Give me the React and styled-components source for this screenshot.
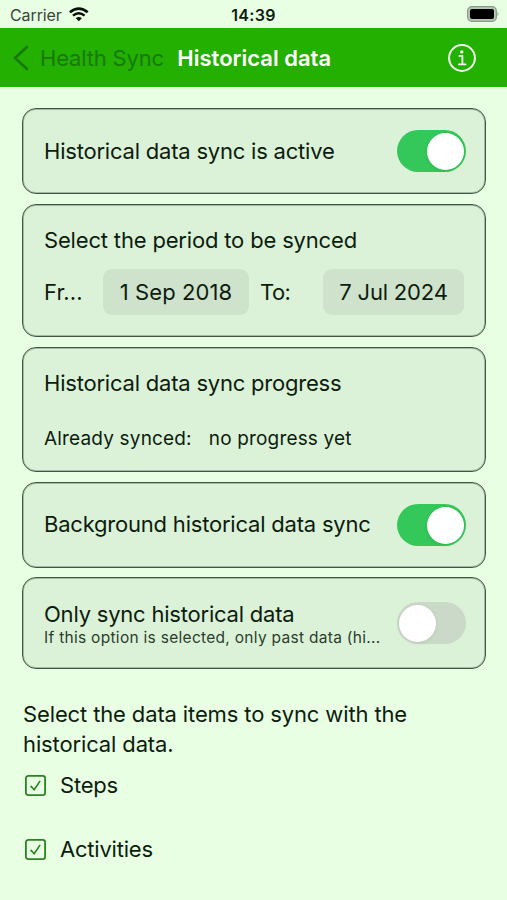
import React, { useState } from 'react';
import styled, { createGlobalStyle } from 'styled-components';

const GlobalStyle = createGlobalStyle`
    * {
        box-sizing: border-box;
    }

    body {
        margin: 0;
        background-color: #e8ffe4;
        color: #0d1c0e;
        font-family: Inter, 'Liberation Sans', sans-serif;
    }

    p, h1 {
        margin: 0;
    }
`;

const Screen = styled.div`
    width: 507px;
    height: 900px;
    overflow: hidden;
    background-color: #e8ffe4;
`;

const StatusBar = styled.div`
    height: 28px;
    padding: 0 8px 0 10px;
    display: grid;
    grid-template-columns: 1fr auto 1fr;
    align-items: center;
    font-size: 16px;
`;

const Carrier = styled.div`
    display: flex;
    align-items: center;
    gap: 7px;
    padding-top: 1px;
    color: #39453a;
    letter-spacing: -0.1px;
`;

const Clock = styled.div`
    margin-right: 2px;
    padding-top: 1px;
    font-weight: 600;
    letter-spacing: 0.3px;
`;

const BatteryIcon = styled.svg`
    justify-self: end;
`;

const NavBar = styled.header`
    height: 59px;
    padding: 0 31px 0 12px;
    display: flex;
    align-items: center;
    background-color: #23b000;
`;

const BackButton = styled.button`
    display: flex;
    align-items: center;
    gap: 12px;
    padding: 0;
    border: none;
    background: none;
    color: #187a05;
    font: inherit;
    font-size: 22px;
    letter-spacing: -0.18px;
`;

const Title = styled.h1`
    flex: 1;
    margin-left: 13.5px;
    color: #fff;
    font-size: 22px;
    font-weight: 600;
    letter-spacing: 0;
`;

const InfoButton = styled.button`
    display: flex;
    padding: 0;
    border: none;
    background: none;
    color: #efffec;
`;

const Content = styled.main`
    padding: 21px 21px 0 22px;
`;

const Card = styled.section`
    height: ${(props) => props.$height}px;
    margin-bottom: ${(props) => props.$gap || 10}px;
    padding: 0 19px 0 21px;
    display: flex;
    flex-direction: ${(props) => (props.$column ? 'column' : 'row')};
    align-items: ${(props) => (props.$column ? 'stretch' : 'center')};
    justify-content: space-between;
    border: 1px solid #435643;
    border-radius: 14px;
    background-color: #dbf2d8;
    box-shadow: inset 0 0 0 1px rgba(63, 84, 64, 0.35);
`;

const Label = styled.p`
    font-size: 22px;
    line-height: 30px;
    letter-spacing: ${(props) => props.$spacing || -0.21}px;
    white-space: nowrap;
`;

const Hint = styled.p`
    color: #2c3d2d;
    font-size: 15.5px;
    line-height: 18px;
    letter-spacing: 0.29px;
    white-space: nowrap;
`;

const Track = styled.button`
    flex: none;
    width: 69px;
    height: 42px;
    padding: 2px;
    display: flex;
    justify-content: ${(props) => (props.$on ? 'flex-end' : 'flex-start')};
    align-items: center;
    border: none;
    border-radius: 21px;
    background-color: ${(props) => (props.$on ? '#34c759' : '#cad9c8')};
`;

const Thumb = styled.span`
    width: 37px;
    height: 37px;
    border-radius: 50%;
    background-color: #fff;
    box-shadow: 0 1px 4px rgba(0, 0, 0, 0.08);
`;

const CardBody = styled.div`
    padding-top: ${(props) => props.$top || 0}px;
    padding-bottom: ${(props) => props.$bottom || 0}px;
`;

const PeriodRow = styled.div`
    margin-top: 14px;
    display: grid;
    grid-template-columns: 59px 146px 74px 141px;
    align-items: center;
`;

const PeriodLabel = styled(Label)`
    padding-left: ${(props) => props.$indent || 0}px;
`;

const DateButton = styled.button`
    height: 46px;
    padding: 0;
    border: none;
    border-radius: 9px;
    background-color: #cfe2cc;
    color: inherit;
    font: inherit;
    font-size: 22px;
    letter-spacing: ${(props) => props.$spacing || 0}px;
    white-space: nowrap;
`;

const ProgressRow = styled.div`
    margin-top: 28px;
    display: flex;
    gap: 17px;
    font-size: 19px;
    line-height: 26px;
    letter-spacing: 0.17px;
`;

const Intro = styled.p`
    margin-top: 30px;
    padding-left: 1px;
    font-size: 22px;
    line-height: 30px;
    letter-spacing: -0.13px;
`;

const Item = styled.label`
    height: 64px;
    padding-left: 3px;
    display: flex;
    align-items: center;
    gap: 14px;
`;

const Items = styled.div`
    margin-top: -6px;
`;

const Switch = ({ initial }) => {
    const [on, setOn] = useState(initial);

    return (
        <Track $on={on} role='switch' aria-checked={on} onClick={() => setOn(!on)}>
            <Thumb />
        </Track>
    );
};

const WifiIcon = () => (
    <svg width='20' height='15' viewBox='0 0 20 15' fill='none' stroke='#080f08'>
        <path d='M0.9 5.2Q9.8 -2 18.7 5.2' strokeWidth='2.7' />
        <path d='M4 8.6Q9.8 3.8 15.6 8.6' strokeWidth='2.5' />
        <path d='M9.8 14.2L6.8 11.3Q9.8 8.8 12.8 11.3Z' fill='#080f08' stroke='none' />
    </svg>
);

const Battery = () => (
    <BatteryIcon width='33' height='16' viewBox='0 0 33 16'>
        <rect x='1.6' y='0.6' width='28.8' height='14.8' rx='4.4' fill='#b5c8b2' stroke='#8a9b88' strokeWidth='1.2' />
        <rect x='4' y='3' width='24' height='10' rx='2' fill='#000' />
        <path d='M31.5 5.8Q33.5 8 31.5 10.2Z' fill='#91a18f' />
    </BatteryIcon>
);

const BackIcon = () => (
    <svg width='16' height='26' viewBox='0 0 16 26' fill='none' stroke='currentColor' strokeWidth='2.7' strokeLinecap='round' strokeLinejoin='round'>
        <path d='M15 2L3 13L15 24' />
    </svg>
);

const InfoIcon = () => (
    <svg width='28' height='28' viewBox='0 0 28 28' fill='none' stroke='currentColor' strokeLinecap='round' strokeLinejoin='round'>
        <circle cx='14' cy='14' r='12.9' strokeWidth='2' />
        <circle cx='13.8' cy='7.9' r='1.7' fill='currentColor' stroke='none' />
        <path d='M11.4 11.9H14.4V20.2M11 20.4H17.6' strokeWidth='1.8' />
    </svg>
);

const CheckIcon = () => (
    <svg width='21' height='21' viewBox='0 0 21 21' fill='none' stroke='#2b8420' strokeLinecap='round' strokeLinejoin='round'>
        <rect x='0.9' y='0.9' width='19.2' height='19.2' rx='2.4' strokeWidth='1.8' />
        <path d='M6 11.4L9.2 14.8L14.8 6.4' strokeWidth='1.6' />
    </svg>
);

const App = () => {
    return (
        <Screen>
            <GlobalStyle />
            <StatusBar>
                <Carrier>
                    Carrier
                    <WifiIcon />
                </Carrier>
                <Clock>14:39</Clock>
                <Battery />
            </StatusBar>
            <NavBar>
                <BackButton>
                    <BackIcon />
                    Health Sync
                </BackButton>
                <Title>Historical data</Title>
                <InfoButton aria-label='Info'>
                    <InfoIcon />
                </InfoButton>
            </NavBar>
            <Content>
                <Card $height={86}>
                    <Label>Historical data sync is active</Label>
                    <Switch initial />
                </Card>
                <Card $height={133} $column>
                    <CardBody $top={20}>
                        <Label $spacing={-0.17}>Select the period to be synced</Label>
                        <PeriodRow>
                            <PeriodLabel $spacing={0.05}>Fr...</PeriodLabel>
                            <DateButton $spacing={0.1}>1 Sep 2018</DateButton>
                            <PeriodLabel $indent={11} $spacing={-0.6}>To:</PeriodLabel>
                            <DateButton $spacing={-0.2}>7 Jul 2024</DateButton>
                        </PeriodRow>
                    </CardBody>
                </Card>
                <Card $height={125} $column>
                    <CardBody $top={20}>
                        <Label>Historical data sync progress</Label>
                        <ProgressRow>
                            <span>Already synced:</span>
                            <span>no progress yet</span>
                        </ProgressRow>
                    </CardBody>
                </Card>
                <Card $height={86} $gap={9}>
                    <CardBody $bottom={2}>
                        <Label>Background historical data sync</Label>
                    </CardBody>
                    <Switch initial />
                </Card>
                <Card $height={92}>
                    <CardBody $bottom={1}>
                        <Label>Only sync historical data</Label>
                        <Hint>If this option is selected, only past data (hi...</Hint>
                    </CardBody>
                    <Switch initial={false} />
                </Card>
                <Intro>
                    Select the data items to sync with the
                    <br />
                    historical data.
                </Intro>
                <Items>
                    <Item>
                        <CheckIcon />
                        <Label>Steps</Label>
                    </Item>
                    <Item>
                        <CheckIcon />
                        <Label>Activities</Label>
                    </Item>
                </Items>
            </Content>
        </Screen>
    );
};

export default App;
